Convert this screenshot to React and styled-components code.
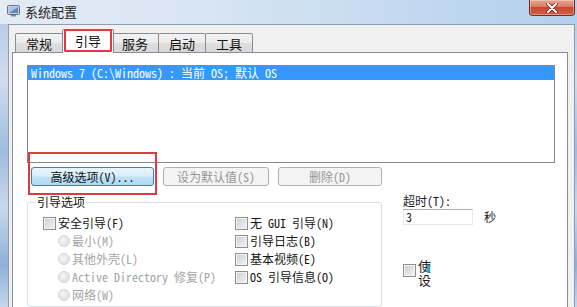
import React from "react";
import styled, { createGlobalStyle } from "styled-components";

const GlobalStyle = createGlobalStyle`
  html, body {
    margin: 0;
    padding: 0;
    background: #ffffff;
    overflow: hidden;
  }
`;

const UI_FONT = `"Noto Sans CJK SC", "Liberation Sans", sans-serif`;
const SONG_FONT = `"Noto Sans Mono CJK SC", "Noto Sans CJK SC", "Liberation Mono", monospace`;

const Window = styled.div`
  width: 577px;
  height: 307px;
  display: flex;
  flex-direction: column;
  overflow: hidden;
  font-family: ${SONG_FONT};
  font-size: 12px;
  color: #1a1a1a;
`;

const TitleBar = styled.div`
  height: 24px;
  flex: none;
  display: flex;
  align-items: flex-start;
  background: linear-gradient(to right, #e3ebf5 0%, #d8e5f4 35%, #c3d9f0 70%, #b4cfec 100%);
`;

const TitleIcon = styled.svg`
  margin: 5px 0 0 7px;
  flex: none;
`;

const TitleText = styled.span`
  margin: 4px 0 0 5px;
  font-family: ${UI_FONT};
  font-size: 13px;
  line-height: 15px;
  color: #1e1e1e;
`;

const CloseButton = styled.div`
  margin-left: auto;
  margin-right: 2px;
  width: 44px;
  height: 15px;
  border: 1px solid #7a2a20;
  border-top: none;
  border-radius: 0 0 4px 4px;
  background: linear-gradient(#e8a898 0%, #d77a64 45%, #c44a31 50%, #cf5e43 100%);
  box-shadow: inset 0 0 0 1px rgba(255, 220, 210, 0.45);
  display: flex;
  align-items: center;
  justify-content: center;
`;

const Body = styled.div`
  flex: 1;
  display: flex;
  min-height: 0;
`;

const SideFrame = styled.div`
  flex: none;
  width: ${(p) => p.$w}px;
  background: linear-gradient(#b9cde6 0%, #cfdcee 20%, #9fbbdd 45%, #c9d9ec 65%, #8fb0d8 85%, #c5d6ea 100%);
`;

const Client = styled.div`
  flex: 1;
  min-width: 0;
  background: #f0f0f0;
  border: 1px solid #8c9cb1;
  border-bottom: none;
  padding: 3px 6px 0 3px;
  display: flex;
  flex-direction: column;
`;

const TabRow = styled.div`
  display: flex;
  align-items: flex-end;
  padding-left: 3px;
  height: 24px;
  flex: none;
`;

const Tab = styled.div`
  position: relative;
  height: ${(p) => (p.$active ? 24 : 20)}px;
  padding: 0 ${(p) => (p.$active ? 12 : 10)}px;
  margin: 0 ${(p) => (p.$active ? -2 : 0)}px -1px;
  border: 1px solid #898c95;
  border-bottom: ${(p) => (p.$active ? "none" : "1px solid #898c95")};
  border-radius: 2px 2px 0 0;
  background: ${(p) =>
    p.$active ? "#ffffff" : "linear-gradient(#f3f3f3 0%, #ebebeb 50%, #dedede 51%, #d8d8d8 100%)"};
  z-index: ${(p) => (p.$active ? 2 : 1)};
  font-family: ${UI_FONT};
  font-size: 13px;
  line-height: ${(p) => (p.$active ? 22 : 20)}px;
  color: #111;
  box-sizing: border-box;
  & + & {
    margin-left: ${(p) => (p.$active ? -1 : 1)}px;
  }

  ${(p) =>
    p.$marked &&
    `
    &::after {
      content: "";
      position: absolute;
      left: 1px;
      right: 1px;
      top: -1px;
      bottom: 1px;
      border: 2px solid #df3a44;
      border-radius: 1px;
    }
  `}
`;

const Panel = styled.div`
  flex: 1;
  background: #ffffff;
  border: 1px solid #898c95;
  border-bottom: none;
  padding: 12px 12px 0 14px;
  display: flex;
  flex-direction: column;
  position: relative;
  z-index: 1;
`;

const ListBox = styled.div`
  height: 98px;
  box-sizing: border-box;
  border: 1px solid #828790;
  flex: none;
`;

const ListItem = styled.div`
  height: 14px;
  line-height: 14px;
  padding-left: 3px;
  background: #3399ff;
  color: #ffffff;
  white-space: nowrap;
`;

const ButtonRow = styled.div`
  display: flex;
  gap: 9px;
  margin-top: 4px;
  padding-left: 4px;
  flex: none;
`;

const Button = styled.div`
  position: relative;
  width: ${(p) => p.$w}px;
  height: 19px;
  box-sizing: border-box;
  border: 1px solid ${(p) => (p.$primary ? "#3c7fb1" : "#adb2b5")};
  border-radius: 3px;
  background: ${(p) =>
    p.$primary
      ? "linear-gradient(#e9f5fc 0%, #d8eefa 48%, #c0e1f5 52%, #b1d9f2 100%)"
      : "#f4f4f4"};
  color: ${(p) => (p.$primary ? "#111" : "#959595")};
  display: flex;
  align-items: center;
  justify-content: center;
  line-height: 14px;

  ${(p) =>
    p.$marked &&
    `
    &::after {
      content: "";
      position: absolute;
      left: -4px;
      right: -4px;
      top: -16px;
      bottom: -10px;
      border: 2px solid #df3a44;
    }
  `}
`;

const Lower = styled.div`
  display: flex;
  margin-top: 9px;
  flex: 1;
`;

const Group = styled.fieldset`
  width: 355px;
  box-sizing: border-box;
  margin: 0;
  padding: 0 0 0 15px;
  border: 1px solid #d5dfe5;
  border-radius: 3px;
  min-width: 0;
  flex: none;
`;

const Legend = styled.legend`
  margin-left: -7px;
  padding: 0 1px;
  line-height: 14px;
  color: #111;
`;

const OptionGrid = styled.div`
  display: grid;
  grid-template-columns: 192px 1fr;
  grid-auto-rows: 18px;
  padding-top: 5px;
`;

const Option = styled.div`
  display: flex;
  align-items: center;
  gap: 2px;
  padding-left: ${(p) => (p.$indent ? 15 : 0)}px;
  color: ${(p) => (p.$disabled ? "#a3a3a3" : "#151515")};
  white-space: nowrap;
  line-height: 14px;
`;

const CheckBox = styled.span`
  width: 13px;
  height: 13px;
  box-sizing: border-box;
  flex: none;
  border: 1px solid #8e8f8f;
  background: linear-gradient(135deg, #c9ccd1 0%, #dfe1e4 50%, #f4f4f4 100%);
  box-shadow: inset 0 0 0 1px #f4f4f4;
`;

const Radio = styled.span`
  width: 12px;
  height: 12px;
  box-sizing: border-box;
  flex: none;
  border-radius: 50%;
  border: 1px solid #d3d6d9;
  background: radial-gradient(circle at 40% 40%, #f6f6f6 0%, #e3e4e6 60%, #d9dadc 100%);
`;

const Side = styled.div`
  padding-left: 21px;
  display: flex;
  flex-direction: column;
`;

const SideLabel = styled.div`
  line-height: 14px;
  margin-top: -1px;
`;

const InputRow = styled.div`
  display: flex;
  align-items: center;
  gap: 11px;
`;

const TextInput = styled.div`
  width: 70px;
  height: 16px;
  box-sizing: border-box;
  border: 1px solid #e3e9ef;
  border-top-color: #abadb3;
  background: #ffffff;
  padding-left: 2px;
  line-height: 14px;
`;

const PermRow = styled.div`
  display: flex;
  align-items: flex-start;
  gap: 2px;
  margin-top: 39px;
`;

const NarrowLabel = styled.span`
  width: 13px;
  line-height: 14px;
  margin-top: -5px;
  font-size: 13px;
  word-break: break-all;
  position: relative;

  &::after {
    content: "";
    position: absolute;
    left: 9px;
    top: 6px;
    width: 3px;
    height: 8px;
    background: #2fa3c9;
    border-radius: 1px;
  }
`;

function CloseGlyph() {
  return (
    <svg width="14" height="10" viewBox="0 0 14 10">
      <path d="M3 1 L11 9 M11 1 L3 9" stroke="#5a1c14" strokeWidth="3.4" strokeLinecap="round" />
      <path d="M3 1 L11 9 M11 1 L3 9" stroke="#ffffff" strokeWidth="2" strokeLinecap="round" />
    </svg>
  );
}

function AppIcon() {
  return (
    <TitleIcon width="13" height="12" viewBox="0 0 13 12">
      <rect x="0.5" y="0.5" width="12" height="9" rx="1" fill="#c9cdd3" stroke="#6b7280" />
      <rect x="2" y="2" width="9" height="6" fill="#5b8bc7" />
      <path d="M2 2 L11 2 L2 8 Z" fill="#a9c6ea" />
      <rect x="4" y="10" width="5" height="1.5" fill="#7c8592" />
    </TitleIcon>
  );
}

const leftOptions = [
  { label: "安全引导(F)", kind: "check" },
  { label: "最小(M)", kind: "radio" },
  { label: "其他外壳(L)", kind: "radio" },
  { label: "Active Directory 修复(P)", kind: "radio" },
  { label: "网络(W)", kind: "radio" },
];

const rightOptions = ["无 GUI 引导(N)", "引导日志(B)", "基本视频(E)", "OS 引导信息(O)"];

export default function App() {
  const cells = [];
  leftOptions.forEach((opt, i) => {
    cells.push(
      opt.kind === "check" ? (
        <Option key={"l" + i}>
          <CheckBox />
          {opt.label}
        </Option>
      ) : (
        <Option key={"l" + i} $indent $disabled>
          <Radio />
          {opt.label}
        </Option>
      )
    );
    cells.push(
      rightOptions[i] ? (
        <Option key={"r" + i}>
          <CheckBox />
          {rightOptions[i]}
        </Option>
      ) : (
        <span key={"r" + i} />
      )
    );
  });

  return (
    <>
      <GlobalStyle />
      <Window>
        <TitleBar>
          <AppIcon />
          <TitleText>系统配置</TitleText>
          <CloseButton>
            <CloseGlyph />
          </CloseButton>
        </TitleBar>
        <Body>
          <SideFrame $w={8} />
          <Client>
            <TabRow>
              <Tab>常规</Tab>
              <Tab $active $marked>
                引导
              </Tab>
              <Tab>服务</Tab>
              <Tab>启动</Tab>
              <Tab>工具</Tab>
            </TabRow>
            <Panel>
              <ListBox>
                <ListItem>{"Windows 7 (C:\\Windows) : 当前 OS; 默认 OS"}</ListItem>
              </ListBox>
              <ButtonRow>
                <Button $w={123} $primary $marked>
                  高级选项(V)...
                </Button>
                <Button $w={106}>设为默认值(S)</Button>
                <Button $w={104}>删除(D)</Button>
              </ButtonRow>
              <Lower>
                <Group>
                  <Legend>引导选项</Legend>
                  <OptionGrid>{cells}</OptionGrid>
                </Group>
                <Side>
                  <SideLabel>超时(T):</SideLabel>
                  <InputRow>
                    <TextInput>3</TextInput>
                    <span>秒</span>
                  </InputRow>
                  <PermRow>
                    <CheckBox />
                    <NarrowLabel>使设</NarrowLabel>
                  </PermRow>
                </Side>
              </Lower>
            </Panel>
          </Client>
          <SideFrame $w={2} />
        </Body>
      </Window>
    </>
  );
}
